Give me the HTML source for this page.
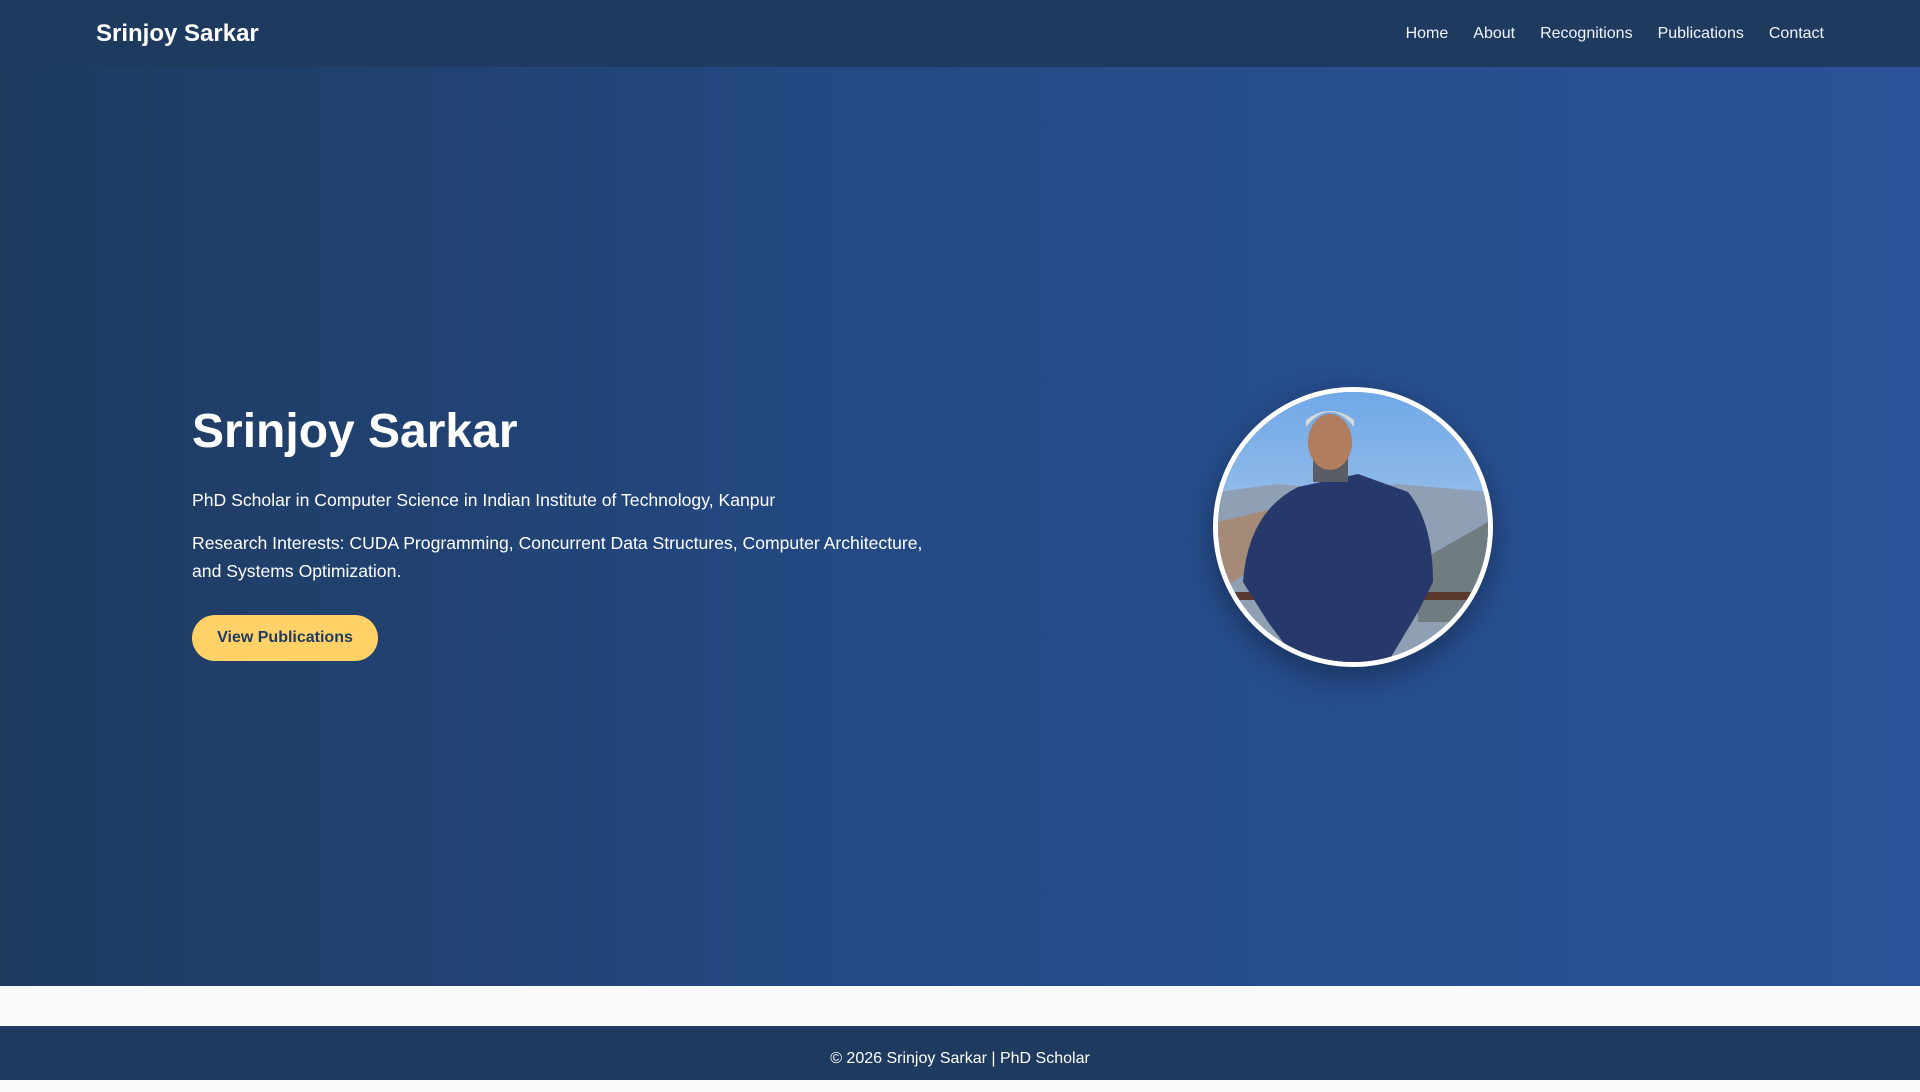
<!DOCTYPE html>
<html><head><meta charset="utf-8"><style>
*{margin:0;padding:0;box-sizing:border-box}
body{width:1920px;height:1080px;overflow:hidden;font-family:"Liberation Sans",sans-serif;background:#f8fafc}
nav{position:absolute;top:0;left:0;width:1920px;height:67px;background:#1f3a5f;color:#fff}
.brand{position:absolute;left:96px;top:20px;font-size:24px;font-weight:bold}
.links{position:absolute;right:96px;top:25px;font-size:16px;display:flex;gap:25px;color:#f0f4fa}
.hero{position:absolute;top:67px;left:0;width:1920px;height:919px;background:linear-gradient(90deg,#1e3a5f 0%,#244a84 45%,#2a5298 100%)}
h1{position:absolute;left:192px;top:404px;font-size:48px;color:#fff;font-weight:bold}
.p1{position:absolute;left:192px;top:490px;font-size:17.6px;color:#fff}
.p2{position:absolute;left:192px;top:529px;width:740px;font-size:17.6px;line-height:28px;color:#fff}
.btn{position:absolute;left:192px;top:615px;width:186px;height:46px;border-radius:23px;background:#ffd166;color:#1e3a5f;font-weight:bold;font-size:16px;text-align:center;line-height:46px}
.photo{position:absolute;left:1213px;top:387px;width:280px;height:280px;border-radius:50%;border:5px solid #fff;overflow:hidden;box-shadow:0 10px 30px rgba(0,0,0,.35)}
footer{position:absolute;top:1026px;left:0;width:1920px;height:54px;background:#1f3a5f;color:#fff;text-align:center;font-size:16px;line-height:66px}
</style></head><body>
<nav><div class="brand">Srinjoy Sarkar</div><div class="links"><span>Home</span><span>About</span><span>Recognitions</span><span>Publications</span><span>Contact</span></div></nav>
<div class="hero"></div>
<h1>Srinjoy Sarkar</h1>
<div class="p1">PhD Scholar in Computer Science in Indian Institute of Technology, Kanpur</div>
<div class="p2">Research Interests: CUDA Programming, Concurrent Data Structures, Computer Architecture, and Systems Optimization.</div>
<div class="btn">View Publications</div>
<div class="photo"><svg width="270" height="270" viewBox="0 0 270 270">
<defs><linearGradient id="s" x1="0" y1="0" x2="0" y2="1"><stop offset="0" stop-color="#6fa8e8"/><stop offset="1" stop-color="#c6d8ea"/></linearGradient></defs>
<rect width="270" height="270" fill="url(#s)"/>
<path d="M0 100 L60 92 L120 98 L180 92 L270 100 L270 270 L0 270Z" fill="#8f9fb4"/>
<path d="M0 130 L50 118 L90 140 L0 200Z" fill="#a58a78"/>
<path d="M200 170 L270 130 L270 230 L200 230Z" fill="#6f7c80"/>
<rect x="0" y="200" width="270" height="8" fill="#5a3a2e"/>
<path d="M25 190 Q30 120 80 95 L140 82 L190 100 Q215 130 215 190 L200 220 L170 270 L80 270 L50 230Z" fill="#27386a"/>
<path d="M95 65 Q112 90 130 65 L130 90 L95 90Z" fill="#5a5c66"/>
<ellipse cx="112" cy="50" rx="22" ry="28" fill="#b07d5e"/>
<path d="M88 35 Q112 5 136 35 L136 28 Q112 10 88 28Z" fill="#d8d8d8"/>
</svg></div>
<footer>© 2026 Srinjoy Sarkar | PhD Scholar</footer>
</body></html>
